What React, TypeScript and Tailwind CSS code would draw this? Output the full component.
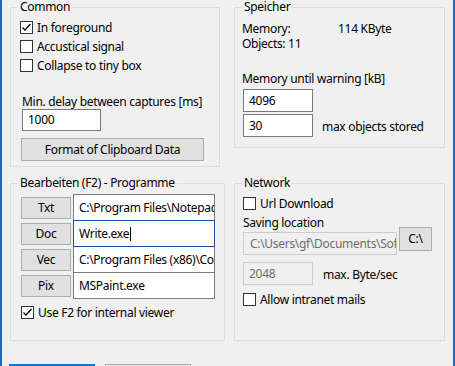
const Check = ({ checked, label }: { checked?: boolean; label: string }) => (
  <div className="flex h-[19px] items-center gap-[4px]">
    <div className="flex h-[13px] w-[13px] items-center justify-center border border-[#333333] bg-white">
      {checked && (
        <svg width="11" height="11" viewBox="0 0 11 11">
          <polyline points="1.5,5.5 4,8 9.5,2" fill="none" stroke="#000" strokeWidth="1.3" />
        </svg>
      )}
    </div>
    <span>{label}</span>
  </div>
);

const Group = ({
  title,
  className,
  children,
}: {
  title: string;
  className: string;
  children: React.ReactNode;
}) => (
  <fieldset className={`border border-[#dcdcdc] ${className}`}>
    <legend className="ml-[7px] px-[2px] leading-[14px]">{title}</legend>
    {children}
  </fieldset>
);

const Btn = ({ label, className }: { label: string; className: string }) => (
  <div
    className={`flex items-center justify-center border border-[#adadad] bg-[#e1e1e1] ${className}`}
  >
    {label}
  </div>
);

const programs = [
  { key: "Txt", path: "C:\\Program Files\\Notepad++\\notepad++.exe" },
  { key: "Doc", path: "Write.exe", focus: true },
  { key: "Vec", path: "C:\\Program Files (x86)\\Corel\\CorelDRAW.exe" },
  { key: "Pix", path: "MSPaint.exe" },
];

export default function App() {
  return (
    <div className="h-[366px] w-[455px] overflow-hidden border-x-2 border-[#2468b8] bg-[#f0f0f0] pl-[8px] font-['Noto_Sans',sans-serif] text-[12px] tracking-[-0.3px] text-black">
      <div className="flex items-start gap-[14px]">
        <Group title="Common" className="h-[167px] w-[210px]">
          <div className="mt-[4px] pl-[9px]">
            <Check checked label="In foreground" />
            <Check label="Accustical signal" />
            <Check label="Collapse to tiny box" />
            <div className="mt-[20px] pl-[2px] leading-[14px]">Min. delay between captures [ms]</div>
            <div className="ml-[2px] flex h-[22px] w-[79px] items-center border border-[#7a7a7a] bg-white pl-[5px]">
              1000
            </div>
            <Btn label="Format of Clipboard Data" className="ml-[1px] mt-[7px] h-[23px] w-[183px]" />
          </div>
        </Group>
        <Group title="Speicher" className="h-[148px] w-[211px]">
          <div className="mt-[7px] pl-[7px]">
            <div className="grid grid-cols-[96px_1fr] leading-[15px]">
              <span>Memory:</span>
              <span>114 KByte</span>
              <span>Objects: 11</span>
            </div>
            <div className="mt-[21px] leading-[14px]">Memory until warning [kB]</div>
            <div className="ml-[1px] mt-[3px] flex h-[23px] w-[70px] items-center border border-[#7a7a7a] bg-white pl-[5px]">
              4096
            </div>
            <div className="ml-[1px] mt-[2px] flex items-center gap-[9px]">
              <div className="flex h-[23px] w-[70px] items-center border border-[#7a7a7a] bg-white pl-[5px]">
                30
              </div>
              <span className="mt-[2px]">max objects stored</span>
            </div>
          </div>
        </Group>
      </div>

      <div className="mt-[9px] flex items-start gap-[9px]">
        <Group title="Bearbeiten (F2) - Programme" className="h-[165px] w-[215px]">
          <div className="mt-[4px] pl-[10px]">
            <div className="flex flex-col">
              {programs.map((p, idx) => (
                <div
                  key={p.key}
                  className={`flex h-[27px] items-center gap-[2px] ${idx > 0 && "-mt-px"} ${p.focus && "relative z-10"}`}
                >
                  <Btn label={p.key} className="h-[22px] w-[50px]" />
                  <div
                    className={`flex h-[27px] w-[142px] items-center overflow-hidden whitespace-nowrap border bg-white pl-[5px] ${
                      p.focus ? "border-[#1b4f9c]" : "border-[#7a7a7a]"
                    }`}
                  >
                    {p.path}
                    {p.focus && <span className="ml-px h-[14px] w-px bg-black" />}
                  </div>
                </div>
              ))}
            </div>
            <div className="mt-[4px]">
              <Check checked label="Use F2 for internal viewer" />
            </div>
          </div>
        </Group>
        <Group title="Network" className="h-[165px] w-[211px]">
          <div className="mt-[4px] pl-[8px]">
            <Check label="Url Download" />
            <div className="mt-[3px] h-[14px] leading-[14px]">Saving location</div>
            <div className="-mt-[3px] flex items-start gap-[2px]">
              <div className="mt-[5px] flex h-[23px] w-[154px] items-center overflow-hidden whitespace-nowrap border border-[#cccccc] bg-[#f0f0f0] pl-[6px] text-[#6d6d6d]">
                {"C:\\Users\\gf\\Documents\\Software"}
              </div>
              <Btn label={"C:\\"} className="h-[24px] w-[33px]" />
            </div>
            <div className="mt-[7px] flex items-center gap-[10px]">
              <div className="flex h-[23px] w-[70px] items-center border border-[#cccccc] bg-[#f0f0f0] pl-[5px] text-[#6d6d6d]">
                2048
              </div>
              <span className="mt-[2px]">max. Byte/sec</span>
            </div>
            <div className="mt-[5px]">
              <Check label="Allow intranet mails" />
            </div>
          </div>
        </Group>
      </div>

      <div className="-ml-px mt-[23px] flex gap-[10px]">
        <div className="h-[23px] w-[86px] border-2 border-[#0078d7] bg-[#e1e1e1]" />
        <div className="h-[23px] w-[86px] border border-[#adadad] bg-[#e1e1e1]" />
      </div>
    </div>
  );
}
